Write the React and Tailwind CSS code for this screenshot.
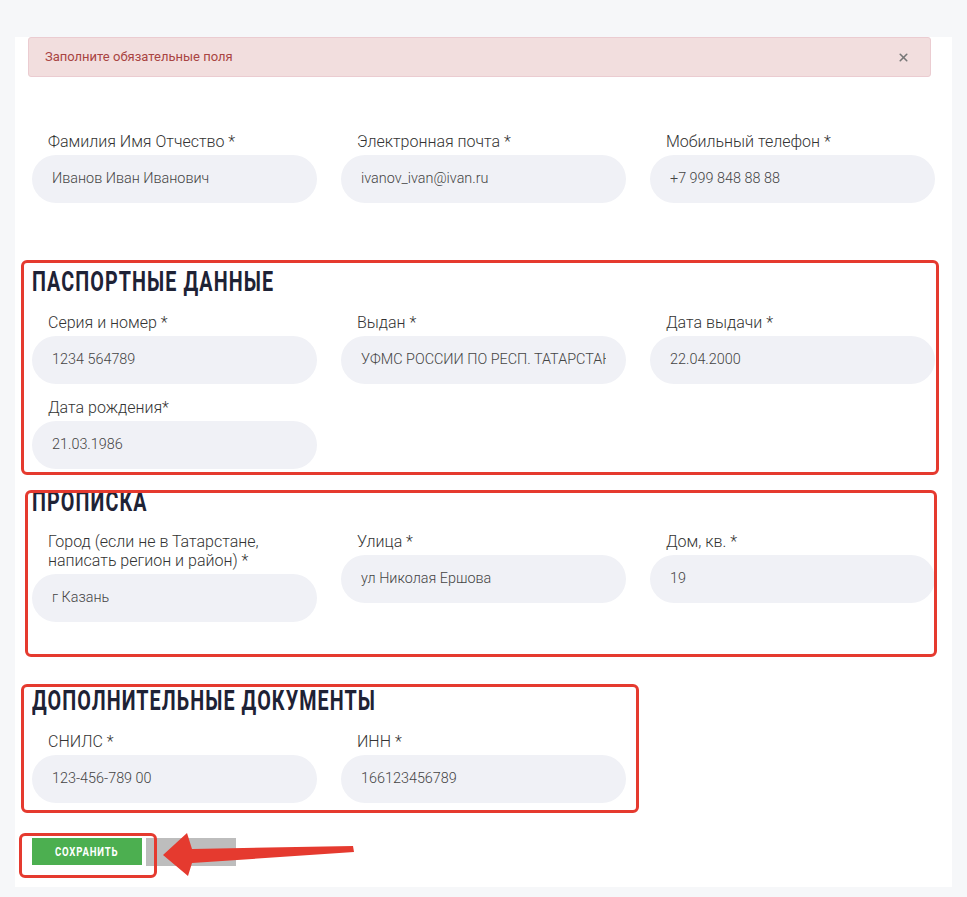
import React from "react";
import { X } from "lucide-react";

const font = { fontFamily: "Roboto, 'Noto Sans', sans-serif" };

const Field = ({ label, value }) => (
  <div className="flex flex-col">
    <div className="pl-4 mb-1 text-[16px] leading-[19px] font-light text-[#333]">{label}</div>
    <div className="h-12 rounded-full bg-[#f0f1f6] px-5 flex items-center text-[14.4px] font-light text-[#444]">
      <div className="flex-1 overflow-hidden whitespace-nowrap">{value}</div>
    </div>
  </div>
);

const Title = ({ children, className }) => (
  <div className={"h-[27px] " + className}>
    <div className="inline-block origin-left scale-x-[0.73] text-[27px] leading-none font-bold tracking-[1.5px] text-[#1e2235] whitespace-nowrap">
      {children}
    </div>
  </div>
);

// red annotation frame drawn over the form
const Frame = ({ className }) => (
  <div className={"absolute pointer-events-none border-[3.5px] border-[#e53a2f] rounded-[6px] " + className} />
);

export default function App() {
  return (
    <div className="relative min-h-[897px] bg-[#f6f7f9] pt-[15px]" style={font}>
      <div className="ml-[15px] w-[937px] bg-white pb-[21px]">
        {/* alert */}
        <div className="ml-[13px] mr-[21px] mt-[22px] h-[40px] flex items-center justify-between bg-[#f2dede] border border-[#ebccd1] rounded-[3px] pl-4 pr-5">
          <span className="text-[13px] text-[#a94442]">Заполните обязательные поля</span>
          <X size={13} strokeWidth={3} className="text-[#777]" />
        </div>

        <div className="pl-[17px]">
          <div className="mt-[55px] grid grid-cols-[285px_285px_285px] gap-x-6">
            <Field label="Фамилия Имя Отчество *" value="Иванов Иван Иванович" />
            <Field label="Электронная почта *" value="ivanov_ivan@ivan.ru" />
            <Field label="Мобильный телефон *" value="+7 999 848 88 88" />
          </div>

          <Title className="mt-[66px]">ПАСПОРТНЫЕ ДАННЫЕ</Title>
          <div className="mt-[17px] grid grid-cols-[285px_285px_285px] gap-x-6 gap-y-[14px]">
            <Field label="Серия и номер *" value="1234 564789" />
            <Field label="Выдан *" value="УФМС РОССИИ ПО РЕСП. ТАТАРСТАН" />
            <Field label="Дата выдачи *" value="22.04.2000" />
            <Field label="Дата рождения*" value="21.03.1986" />
          </div>

          <Title className="mt-[20px]">ПРОПИСКА</Title>
          <div className="mt-[16px] grid grid-cols-[285px_285px_285px] gap-x-6 items-start">
            <Field
              label={<>Город (если не в Татарстане,<br />написать регион и район) *</>}
              value="г Казань"
            />
            <Field label="Улица *" value="ул Николая Ершова" />
            <Field label="Дом, кв. *" value="19" />
          </div>

          <Title className="mt-[66px]">ДОПОЛНИТЕЛЬНЫЕ ДОКУМЕНТЫ</Title>
          <div className="mt-[17px] grid grid-cols-[285px_285px] gap-x-6">
            <Field label="СНИЛС *" value="123-456-789 00" />
            <Field label="ИНН *" value="166123456789" />
          </div>

          <div className="mt-[35px] flex gap-1">
            <button className="w-[110px] h-[27px] bg-[#4caf50] flex items-center justify-center">
              <span className="inline-block scale-x-[0.8] text-[12px] font-bold tracking-[1px] text-white">СОХРАНИТЬ</span>
            </button>
            <div className="w-[90px] h-[28px] bg-[#bdbdbd]" />
          </div>
        </div>
      </div>

      <Frame className="left-[21px] top-[260px] w-[918px] h-[215px]" />
      <Frame className="left-[25px] top-[490px] w-[912px] h-[167px]" />
      <Frame className="left-[21px] top-[684px] w-[618px] h-[129px]" />
      <Frame className="left-[19px] top-[833px] w-[138px] h-[45px]" />

      <svg className="absolute left-[160px] top-[830px]" width="200" height="50" viewBox="160 830 200 50">
        <polygon
          points="163,855 187,833 192,849 353,846 354,852 192,863 188,876"
          fill="#e53a2f"
        />
      </svg>
    </div>
  );
}
